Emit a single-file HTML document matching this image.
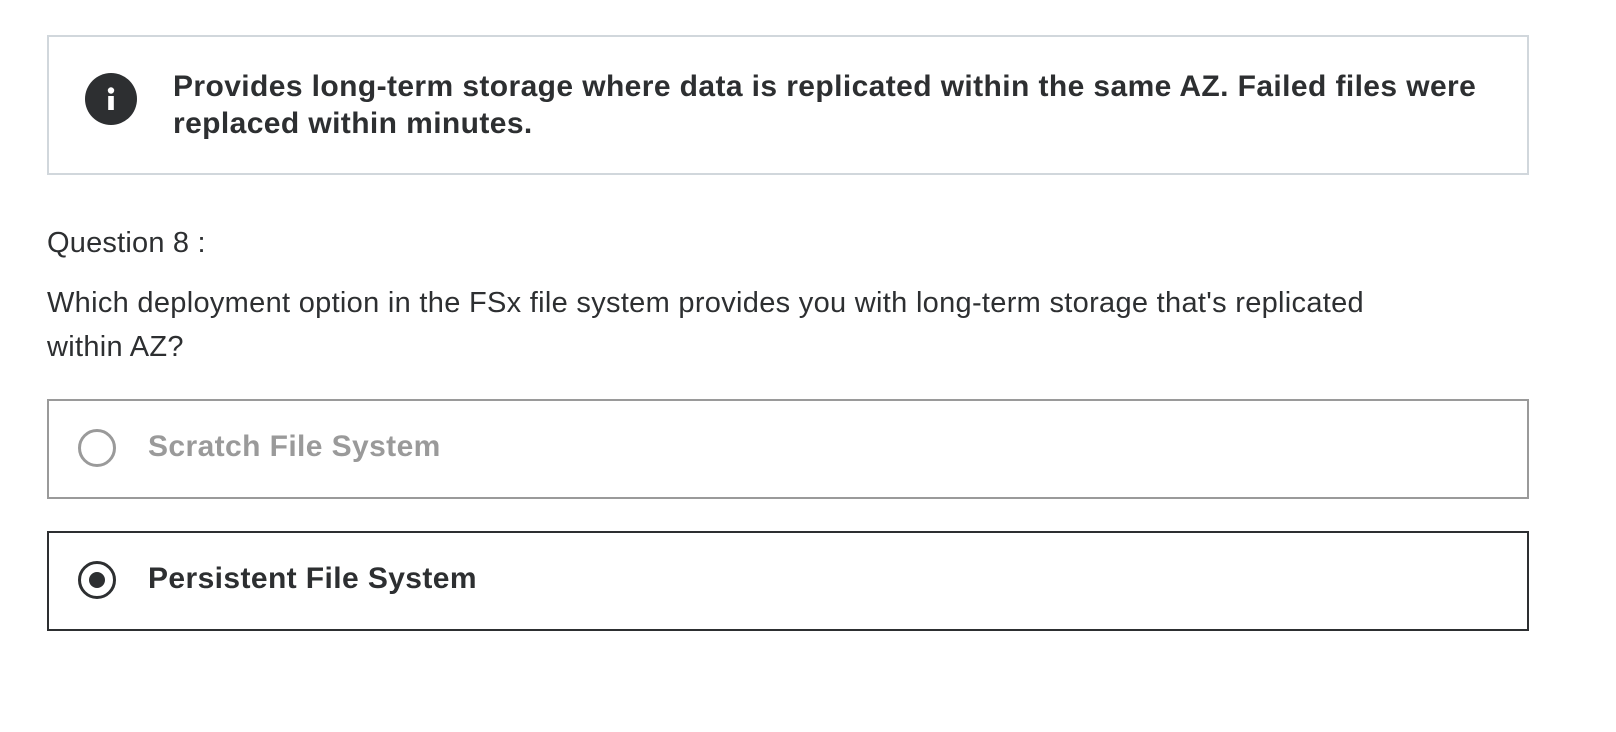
<!DOCTYPE html>
<html><head><style>
body{margin:0;width:1616px;height:732px;background:#fff;font-family:"Liberation Sans",sans-serif;color:#2d2f31;position:relative;overflow:hidden}
.abs{position:absolute}
.box1{left:47px;top:35px;width:1478px;height:136px;border:2px solid #d1d7dc}
.info{left:85px;top:73px;width:52px;height:52px;border-radius:50%;background:#2d2f31}
.t1{left:173px;top:68px;font-weight:bold;font-size:30px;line-height:37px;width:1340px;letter-spacing:0.4px}
.q{left:47px;top:227px;font-size:29px;letter-spacing:0.2px}
.qt{left:47px;top:281px;font-size:29px;line-height:44px;width:1380px;letter-spacing:0.3px}
.opt{left:47px;width:1478px;height:96px;border:2px solid #9a9a9a}
.radio{left:78px;width:32px;height:32px;border-radius:50%;border:3px solid #9a9a9a}
.ol{left:148px;font-weight:bold;font-size:30px;letter-spacing:0.4px}
</style></head><body>
<div class="abs box1"></div>
<div class="abs info"><svg width="52" height="52"><circle cx="26" cy="17.5" r="3.2" fill="#fff"/><rect x="23.2" y="23" width="5.6" height="14" fill="#fff"/></svg></div>
<div class="abs t1">Provides long-term storage where data is replicated within the same AZ. Failed files were replaced within minutes.</div>
<div class="abs q">Question 8 :</div>
<div class="abs qt">Which deployment option in the FSx file system provides you with long-term storage that's replicated within AZ?</div>
<div class="abs opt" style="top:399px"></div>
<div class="abs radio" style="top:429px"></div>
<div class="abs ol" style="top:430px;color:#9a9a9a">Scratch File System</div>
<div class="abs opt" style="top:531px;border-color:#2d2f31"></div>
<div class="abs radio" style="top:561px;border-color:#2d2f31"><div style="position:absolute;left:8px;top:8px;width:16px;height:16px;border-radius:50%;background:#2d2f31"></div></div>
<div class="abs ol" style="top:562px">Persistent File System</div>
</body></html>
